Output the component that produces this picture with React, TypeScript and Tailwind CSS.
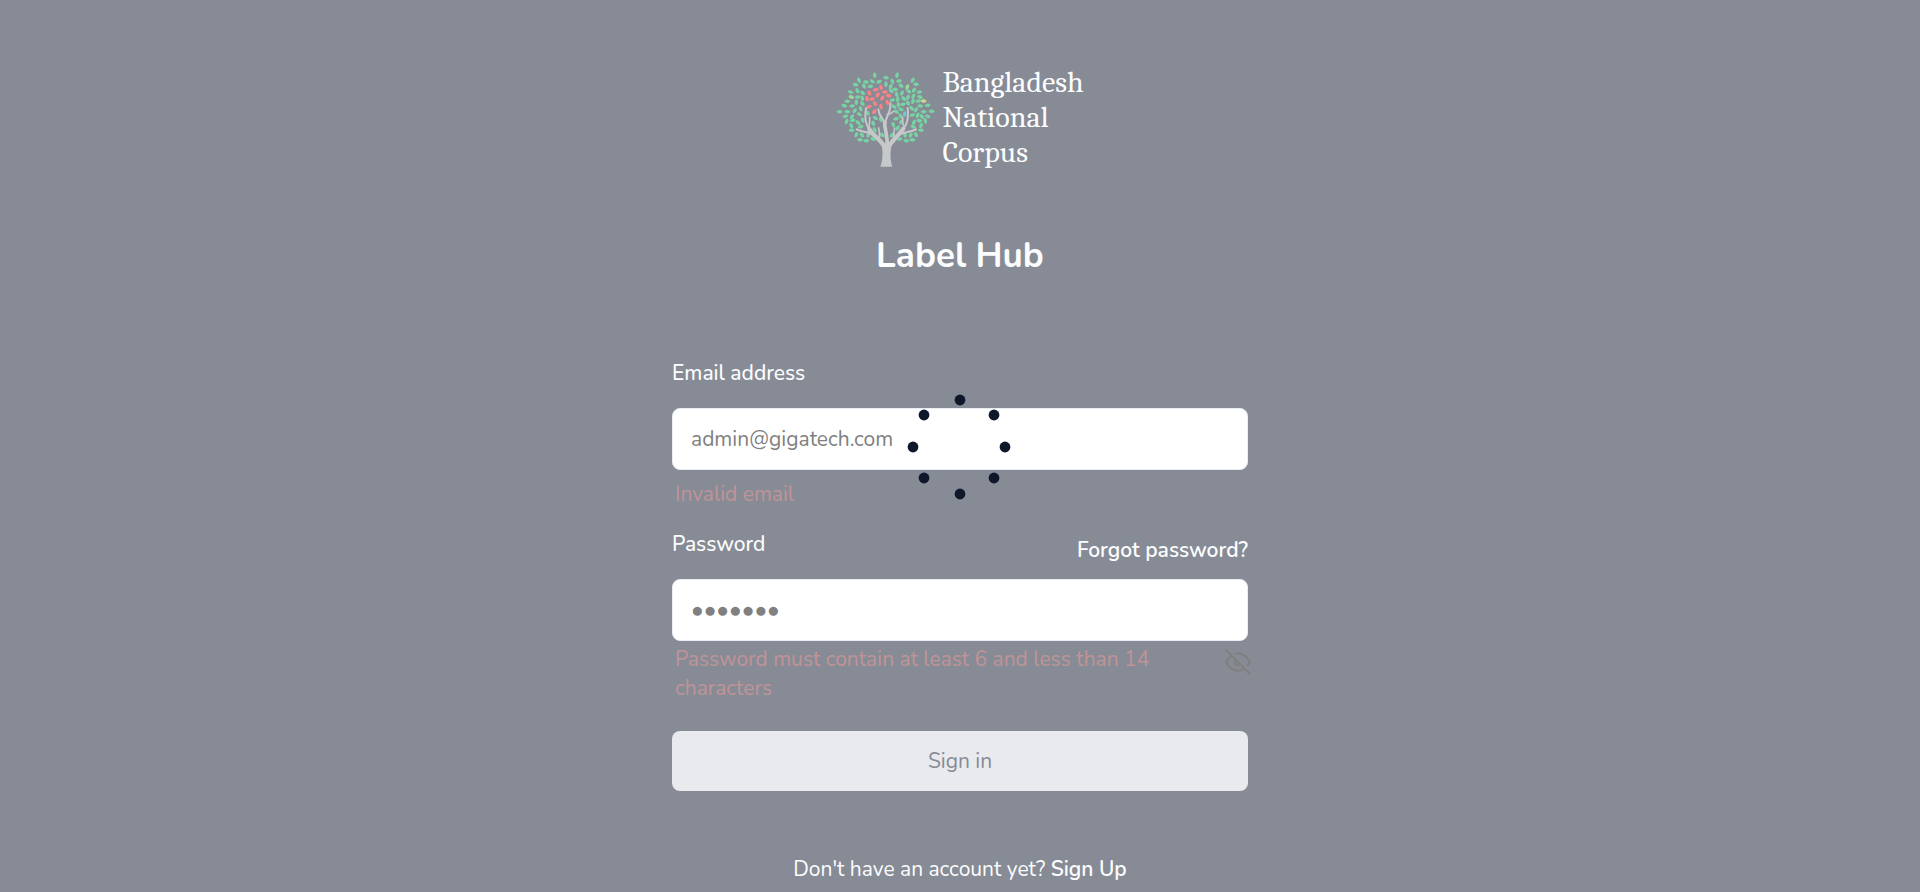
type Leaf = [x: number, y: number, angle: number, color?: string];

const GREEN = "#78d3a4";
const RED = "#f98385";
const LIME = "#9bdc94";
const YELLOW = "#cdd788";
const BLUE = "#79c3cf";

const leaves: Leaf[] = [
  // crown, left half
  [134, 34, 82], [87, 49, 65], [108, 54, 5], [127, 52, 35], [147, 53, -30], [168, 41, 0],
  [77, 62, 15], [102, 66, 60], [121, 67, -12], [153, 70, 80, RED], [137, 77, -15, RED],
  [164, 84, -12, RED], [82, 80, 65], [98, 87, 35], [118, 87, 60, RED], [143, 93, 115, RED],
  [62, 84, 15], [64, 99, 20, LIME], [83, 99, -15], [97, 103, 70], [111, 104, 75, RED],
  [126, 105, -20, RED], [157, 102, 120, RED], [176, 95, 10, RED], [52, 112, 0], [79, 115, 85],
  [97, 119, 45], [43, 125, 15], [66, 126, -12], [117, 128, -25, RED], [135, 119, 60, RED],
  [92, 134, 65], [29, 143, 0], [52, 143, 0], [74, 140, 125], [133, 143, 120, RED],
  [153, 128, 75, RED], [46, 157, -20], [66, 158, 125], [88, 151, 25], [113, 147, 60],
  [50, 173, 110], [68, 169, -12], [84, 176, 45], [136, 162, 30], [98, 168, 70],
  [64, 185, 60], [65, 199, 0], [92, 188, -20], [79, 212, 115], [96, 213, 50],
  [115, 213, 110], [90, 227, 0], [109, 230, 0], [129, 225, 20], [134, 197, 55], [157, 213, 40],
  [130, 178, 70],
  // crown, right half
  [201, 34, 98], [187, 52, 70], [207, 51, -10], [248, 49, 115], [258, 61, 0], [213, 65, 30],
  [232, 69, 110, LIME], [168, 61, 90], [182, 68, 110], [196, 76, 15], [216, 87, 110],
  [236, 82, 30], [252, 78, 120], [268, 84, -15], [270, 99, 20], [250, 97, 115], [234, 100, 110],
  [221, 104, 45], [200, 91, 75], [184, 81, 25], [187, 108, -20], [203, 106, 100],
  [265, 111, -15], [281, 111, 0, YELLOW], [249, 112, 110], [234, 117, 60],
  [219, 121, -15], [205, 122, 90], [192, 128, 35], [172, 115, 75, RED], [293, 124, -15],
  [271, 126, 0], [258, 137, 115], [245, 133, 45], [213, 136, 20], [199, 143, 30],
  [305, 142, 0], [281, 143, 0], [293, 157, 20], [276, 158, 45], [263, 154, 110], [247, 153, -20],
  [224, 150, 95, BLUE], [212, 156, 60], [198, 164, -15],
  [286, 171, 75], [268, 170, 10], [252, 175, 115], [273, 185, 110],
  [273, 199, 0], [250, 188, 20], [258, 212, 60], [242, 213, 120], [225, 213, 80],
  [247, 227, 0], [229, 230, 0], [209, 225, -20], [186, 213, 120], [203, 192, 115],
  [190, 182, 70], [213, 174, 110], [152, 166, 70],
];

function TreeLogo() {
  return (
    <svg viewBox="18 18 300 300" className="size-[100px] shrink-0" aria-hidden="true">
      {leaves.map(([x, y, angle, color], i) => (
        <path
          key={i}
          d="M-9 0C-6 -7 5 -7 9 0C6 7 -5 7 -9 0Z"
          fill={color ?? GREEN}
          transform={`translate(${x} ${y}) rotate(${angle})`}
        />
      ))}
      <g fill="none" stroke="#c6c8c9" strokeLinecap="round">
        <path d="M165 252C155 228 128 214 118 196" strokeWidth="13" />
        <path d="M120 200C110 184 102 170 108 132" strokeWidth="6" />
        <path d="M116 192C118 184 120 178 119 160" strokeWidth="5" />
        <path d="M136 214C118 202 98 206 80 196" strokeWidth="6" />
        <path d="M148 222C150 212 148 204 146 192" strokeWidth="5" />
        <path d="M173 255C182 230 208 214 220 194" strokeWidth="13" />
        <path d="M218 198C230 182 236 170 233 132" strokeWidth="6" />
        <path d="M222 188C218 180 217 174 218 160" strokeWidth="5" />
        <path d="M204 214C222 202 242 206 258 196" strokeWidth="6" />
        <path d="M192 222C190 212 192 204 194 192" strokeWidth="5" />
        <path d="M172 240C172 214 164 196 164 176" strokeWidth="11" />
        <path d="M164 180C162 162 146 160 145 136" strokeWidth="6" />
        <path d="M166 180C166 156 184 146 181 118" strokeWidth="6" />
        <path d="M172 152C180 150 186 148 191 142" strokeWidth="5" />
      </g>
      <path d="M151 308C158 292 160 262 154 240L170 236L186 240C179 262 181 292 187 308Z" fill="#c6c8c9" />
    </svg>
  );
}

function EyeOff() {
  return (
    <svg
      viewBox="0 0 24 24"
      className="size-[26px]"
      fill="none"
      stroke="currentColor"
      strokeWidth="2"
      strokeLinecap="round"
      strokeLinejoin="round"
      aria-hidden="true"
    >
      <path d="M17.94 17.94A10.07 10.07 0 0 1 12 20c-7 0-11-8-11-8a18.45 18.45 0 0 1 5.06-5.94M9.9 4.24A9.12 9.12 0 0 1 12 4c7 0 11 8 11 8a18.5 18.5 0 0 1-2.16 3.19m-6.72-1.07a3 3 0 1 1-4.24-4.24" />
      <path d="M1 1l22 22" />
    </svg>
  );
}

const dots = [
  [53, 7], [17, 22], [87, 22], [6, 54], [98, 54], [17, 85], [87, 85], [53, 101],
];

function Spinner() {
  return (
    <div className="pointer-events-none fixed inset-0 flex items-center justify-center" role="status" aria-label="Loading">
      <svg viewBox="0 0 106 107" className="h-[107px] w-[106px]" fill="#0f172a">
        {dots.map(([cx, cy]) => (
          <circle key={`${cx}-${cy}`} cx={cx} cy={cy} r="5.4" />
        ))}
      </svg>
    </div>
  );
}

const inputClass =
  "block h-[62px] w-full rounded-lg border border-[#e8edf4] bg-white px-[18px] text-[#808080] placeholder:text-[#808080] placeholder:opacity-100 outline-none";

export default function App() {
  return (
    <div className="min-h-screen bg-[#878b95] font-['Nunito','Open_Sans',sans-serif] text-[21px] leading-[29px] text-[#fcfdfe]">
      <main className="mx-auto flex w-full max-w-xl flex-col pt-[65px]">
        <div className="flex items-end justify-center gap-1.5">
          <TreeLogo />
          <p className="font-['Cambria','Caladea',serif] text-[30px] leading-[35px]">
            Bangladesh
            <br />
            National
            <br />
            Corpus
          </p>
        </div>

        <h1 className="mt-16 text-center text-[35px] font-bold leading-[44px]">Label Hub</h1>

        <form className="mt-[81px] flex flex-col" onSubmit={(e) => e.preventDefault()}>
          <label htmlFor="email" className="font-medium">Email address</label>
          <input id="email" type="email" placeholder="admin@gigatech.com" className={`mt-5 ${inputClass}`} />
          <p className="mt-2.5 pl-[3px] text-[#c09497]">Invalid email</p>

          <div className="mt-[21px] flex items-start justify-between font-medium">
            <label htmlFor="password">Password</label>
            <a href="#forgot" className="mt-1.5 font-semibold">Forgot password?</a>
          </div>
          <input id="password" type="password" placeholder="●●●●●●●" className={`mt-3.5 ${inputClass}`} />
          <div className="mt-1 -mr-[3px] flex items-start justify-between">
            <p className="max-w-[500px] pl-[3px] text-[#c09497]">
              Password must contain at least 6 and less than 14 characters
            </p>
            <button type="button" aria-label="Show password" className="mt-1 text-[#80807f]">
              <EyeOff />
            </button>
          </div>

          <button type="submit" className="mt-7 h-[60px] w-full rounded-lg bg-[#e8eaee] text-[#878b95]">
            Sign in
          </button>
        </form>

        <p className="mt-16 text-center">
          Don't have an account yet? <a href="#signup" className="font-semibold">Sign Up</a>
        </p>
      </main>
      <Spinner />
    </div>
  );
}
